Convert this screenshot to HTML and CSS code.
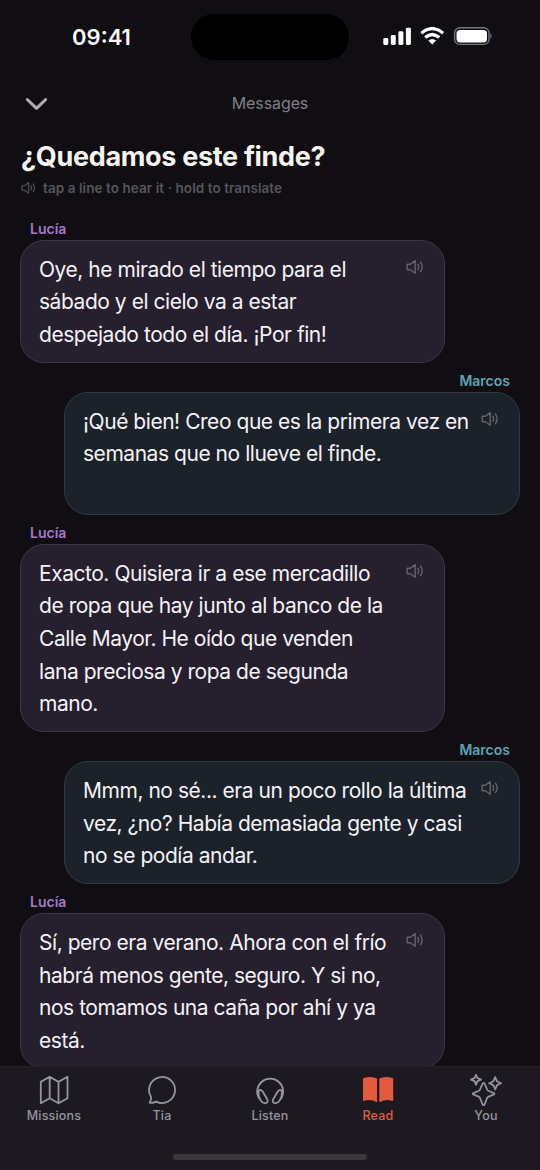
FILE: index.html
```html
<!DOCTYPE html>
<html lang="es">
<head>
<meta charset="utf-8">
<title>¿Quedamos este finde?</title>
<link rel="stylesheet" href="styles.css">
</head>
<body>
<svg class="defs" width="0" height="0" aria-hidden="true">
  <symbol id="speaker" viewBox="0 0 18 16">
    <path d="M1.2 5.2H4.4L9.2 1.6V14.2L4.4 10.7H1.2Z" stroke-linejoin="round"/>
    <path d="M11.9 5.3Q13.3 7.9 11.9 10.5M14.5 3.1Q17.7 7.9 14.5 12.7" stroke-linecap="round"/>
  </symbol>
</svg>
<div class="phone">
  <div class="status">
    <span class="time">09:41</span>
    <span class="island"></span>
    <svg class="system" width="110" height="20" viewBox="0 0 110 20">
      <g fill="#fff">
        <rect x="0.3" y="11" width="5" height="7" rx="1.4"/>
        <rect x="7.8" y="8" width="5" height="10" rx="1.4"/>
        <rect x="15.4" y="4.3" width="5" height="13.7" rx="1.4"/>
        <rect x="22.9" y="0.7" width="5" height="17.3" rx="1.4"/>
      </g>
      <g fill="none" stroke="#fff" stroke-width="3.3">
        <path d="M38.3 6.2Q49.2-3 60.1 6.2"/>
        <path d="M42.2 10.5Q49.2 4.4 56.2 10.5"/>
      </g>
      <path d="M45.3 13.6Q49.2 10.2 53.1 13.6L49.2 17.6Z" fill="#fff"/>
      <rect x="71.6" y="0.8" width="34.4" height="16.6" rx="5.2" fill="none" stroke="#77757a" stroke-width="1.4"/>
      <rect x="73.5" y="2.9" width="30.5" height="12.5" rx="3.6" fill="#fff"/>
      <path d="M107.4 6.5Q110 9.2 107.4 11.9Z" fill="#77757a"/>
    </svg>
  </div>
  <header class="nav">
    <svg width="24" height="16" viewBox="0 0 24 16" fill="none" stroke="#b1adb5" stroke-width="3" stroke-linecap="round" stroke-linejoin="round"><path d="M3.3 3.5L12.5 12.3L21.7 3.5"/></svg>
    <span class="nav-title">Messages</span>
  </header>
  <h1 class="title">¿Quedamos este finde?</h1>
  <p class="hint"><svg class="hint-icon"><use href="#speaker"/></svg><span>tap a line to hear it · hold to translate</span></p>
  <main class="thread">
    <section class="message lucia">
      <div class="author">Lucía</div>
      <div class="bubble"><p>Oye, he mirado el tiempo para el<br>sábado y el cielo va a estar<br>despejado todo el día. ¡Por fin!</p><svg class="speaker"><use href="#speaker"/></svg></div>
    </section>
    <section class="message marcos">
      <div class="author">Marcos</div>
      <div class="bubble"><p>¡Qué bien! Creo que es la primera vez en<br>semanas que no llueve el finde.</p><svg class="speaker"><use href="#speaker"/></svg></div>
    </section>
    <section class="message lucia">
      <div class="author">Lucía</div>
      <div class="bubble"><p>Exacto. Quisiera ir a ese mercadillo<br>de ropa que hay junto al banco de la<br>Calle Mayor. He oído que venden<br>lana preciosa y ropa de segunda<br>mano.</p><svg class="speaker"><use href="#speaker"/></svg></div>
    </section>
    <section class="message marcos">
      <div class="author">Marcos</div>
      <div class="bubble"><p>Mmm, no sé... era un poco rollo la última<br>vez, ¿no? Había demasiada gente y casi<br>no se podía andar.</p><svg class="speaker"><use href="#speaker"/></svg></div>
    </section>
    <section class="message lucia">
      <div class="author">Lucía</div>
      <div class="bubble"><p>Sí, pero era verano. Ahora con el frío<br>habrá menos gente, seguro. Y si no,<br>nos tomamos una caña por ahí y ya<br>está.</p><svg class="speaker"><use href="#speaker"/></svg></div>
    </section>
  </main>
  <footer class="tabbar">
    <nav class="tabs">
      <a class="tab"><svg viewBox="0 0 32 32"><path d="M2.8 7.9L11.7 2.8L20.5 7.9L29.5 2.8V24.2L20.5 29.3L11.7 24.2L2.8 29.3ZM11.7 2.8V24.2M20.5 7.9V29.3"/></svg><span>Missions</span></a>
      <a class="tab"><svg viewBox="0 0 32 32"><path d="M5 22.8A13 13 0 1 1 10.2 27.6Q7.2 29.3 3.6 28.6Q5.5 25.8 5 22.8Z"/></svg><span>Tia</span></a>
      <a class="tab"><svg viewBox="0 0 32 32"><path d="M5 24.3A13 13 0 1 1 27.4 24.3M4.5 16.8Q7.1 14.8 8.8 17.7L13.2 25.2Q14.7 28.3 11.7 29.1H10.7Q8.6 29.3 6.6 26.2Q3.9 21.8 4.5 16.8ZM27.9 16.8Q25.3 14.8 23.6 17.7L19.2 25.2Q17.7 28.3 20.7 29.1H21.7Q23.8 29.3 25.8 26.2Q28.5 21.8 27.9 16.8Z"/></svg><span>Listen</span></a>
      <a class="tab active"><svg viewBox="0 0 32 32"><path d="M1 4.2Q9.5 1.5 15.1 4.6V28.3Q8.5 24.6 1.8 26.9Q1 27.1 1 26.1ZM17.3 4.6Q22.9 1.5 31.2 4.2V26.1Q31.2 27.1 30.4 26.9Q23.9 24.6 17.3 28.3Z"/></svg><span>Read</span></a>
      <a class="tab"><svg viewBox="0 0 32 32"><path d="M13.6 8.8Q14.4 8.8 14.8 10L17.1 15.5Q17.6 16.6 18.7 17L23.8 19.1Q25.1 19.8 23.8 20.5L18.7 22.6Q17.6 23 17.1 24L14.8 30Q14.4 31.2 13.6 31.2Q12.8 31.2 12.4 30L10 24Q9.6 23 8.5 22.6L3.4 20.5Q2.1 19.8 3.4 19.1L8.5 17Q9.6 16.6 10 15.5L12.4 10Q12.8 8.8 13.6 8.8Z"/><path d="M6 .9L7.5 4.2L11 5.7L7.5 7.2L6 10.7L4.5 7.2L1 5.7L4.5 4.2ZM25.2 3L27 7.3L31.1 9.2L27 11.1L25.2 15.4L23.4 11.1L19.1 9.2L23.4 7.3Z"/></svg><span>You</span></a>
    </nav>
    <div class="home"></div>
  </footer>
</div>
</body>
</html>
```

FILE: styles.css
```css
* { box-sizing: border-box; }
body { margin: 0; background: #100e13; font-family: Inter, "Liberation Sans", sans-serif; }
.defs { position: absolute; }
.phone { width: 540px; height: 1170px; overflow: hidden; display: flex; flex-direction: column; background: #100e13; color: #f5f2f7; }
.status { flex: none; height: 74px; display: grid; grid-template-columns: 191px 158px 191px; align-items: center; }
.time { padding-left: 12px; text-align: center; font-size: 22px; font-weight: 600; color: #fff; }
.island { height: 46px; border-radius: 23px; background: #000; }
.system { margin-left: 34px; }
.nav { flex: none; height: 60px; display: grid; grid-template-columns: 24px 1fr 24px; align-items: center; padding: 0 24px; }
.nav-title { text-align: center; font-size: 16px; padding-bottom: 2px; letter-spacing: -0.1px; color: #827f87; }
.title { margin: 0; flex: none; height: 44px; padding: 1px 0 0 21px; font-size: 27px; line-height: 44px; font-weight: 650; letter-spacing: -0.32px; white-space: nowrap; color: #f7f5f0; }
.hint { margin: 0; flex: none; height: 20px; display: flex; align-items: center; gap: 7px; padding-left: 21px; font-size: 13.5px; font-weight: 600; letter-spacing: 0.07px; color: #58555d; }
.hint-icon { width: 15px; height: 14px; fill: none; stroke: #58555d; stroke-width: 1.3; }
.thread { flex: 1; min-height: 0; overflow: hidden; padding: 22px 20px 0; display: flex; flex-direction: column; }
.message { flex: none; display: flex; flex-direction: column; }
.author { height: 20px; padding: 0 10px; font-size: 14px; line-height: 18.5px; font-weight: 600; }
.bubble { display: flex; justify-content: space-between; align-items: flex-start; border: 1px solid; border-radius: 24px; min-height: 122.6px; padding: 12.6px 20px 10px 18px; margin-bottom: 9.4px; }
.bubble p { margin: 0; font-size: 21px; font-weight: 380; line-height: 32.67px; white-space: nowrap; letter-spacing: -0.46px; }
.speaker { flex: none; width: 18px; height: 16px; margin-top: 5.4px; fill: none; stroke: #67616d; stroke-width: 1.4; }
.lucia { width: 425px; }
.lucia .author { color: #a578ce; }
.lucia .bubble { background: #261f2d; border-color: #40334b; }
.marcos { width: 456px; align-self: flex-end; }
.marcos .author { color: #5ca4b5; text-align: right; }
.marcos .bubble { background: #1b2229; border-color: #2a3d45; }
.tabbar { flex: none; height: 104px; display: flex; flex-direction: column; align-items: center; justify-content: space-between; padding: 7px 0 10px; background: #1c1a20; border-top: 1px solid #242128; }
.tabs { width: 100%; display: grid; grid-template-columns: repeat(5, 1fr); }
.tab { display: flex; flex-direction: column; align-items: center; gap: 2px; font-size: 12.5px; line-height: 16px; font-weight: 500; letter-spacing: 0.2px; color: #97939f; }
.tab svg { width: 32px; height: 32px; fill: none; stroke: #97939f; stroke-width: 1.8; stroke-linecap: round; stroke-linejoin: round; }
.tab.active { color: #e45a3d; }
.tab.active svg { fill: #e45a3d; stroke: none; }
.home { width: 194px; height: 6px; border-radius: 3px; background: #3a383d; }
```
